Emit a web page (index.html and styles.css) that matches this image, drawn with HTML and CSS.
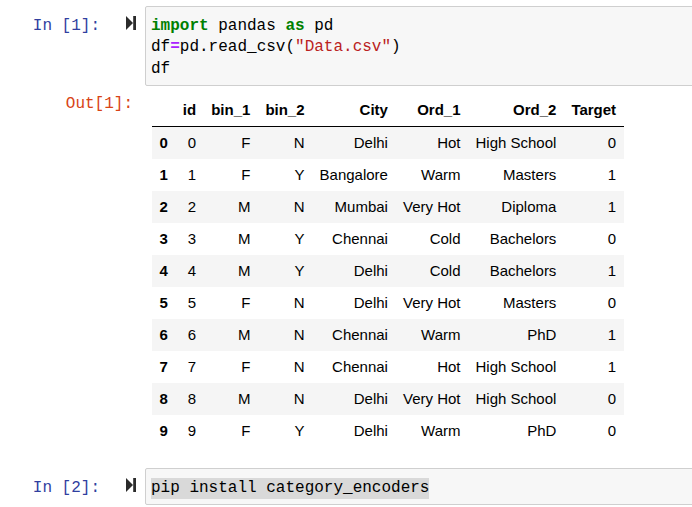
FILE: index.html
```html
<!DOCTYPE html>
<html>
<head>
<meta charset="utf-8">
<link rel="stylesheet" href="styles.css">
</head>
<body>
<div class="notebook">
  <div class="cell cell-first">
    <div class="in-row">
      <div class="prompt in-prompt">In&nbsp;[1]:</div>
      <div class="runbtn">
        <svg width="10" height="14" viewBox="0 0 10 14"><polygon points="0,0 7,7 0,14" fill="#2b2b2b"/><rect x="7.2" y="0" width="2.8" height="14" fill="#2b2b2b"/></svg>
      </div>
      <div class="input"><pre class="code"><span class="kw">import</span> pandas <span class="kw">as</span> pd
df<span class="op">=</span>pd.read_csv(<span class="str">"Data.csv"</span>)
df</pre></div>
    </div>
    <div class="out-row">
      <div class="prompt out-prompt">Out[1]:</div>
      <div class="output">
        <table class="df">
          <thead>
            <tr><th></th><th>id</th><th>bin_1</th><th>bin_2</th><th>City</th><th>Ord_1</th><th>Ord_2</th><th>Target</th></tr>
          </thead>
          <tbody>
            <tr><th>0</th><td>0</td><td>F</td><td>N</td><td>Delhi</td><td>Hot</td><td>High School</td><td>0</td></tr>
            <tr><th>1</th><td>1</td><td>F</td><td>Y</td><td>Bangalore</td><td>Warm</td><td>Masters</td><td>1</td></tr>
            <tr><th>2</th><td>2</td><td>M</td><td>N</td><td>Mumbai</td><td>Very Hot</td><td>Diploma</td><td>1</td></tr>
            <tr><th>3</th><td>3</td><td>M</td><td>Y</td><td>Chennai</td><td>Cold</td><td>Bachelors</td><td>0</td></tr>
            <tr><th>4</th><td>4</td><td>M</td><td>Y</td><td>Delhi</td><td>Cold</td><td>Bachelors</td><td>1</td></tr>
            <tr><th>5</th><td>5</td><td>F</td><td>N</td><td>Delhi</td><td>Very Hot</td><td>Masters</td><td>0</td></tr>
            <tr><th>6</th><td>6</td><td>M</td><td>N</td><td>Chennai</td><td>Warm</td><td>PhD</td><td>1</td></tr>
            <tr><th>7</th><td>7</td><td>F</td><td>N</td><td>Chennai</td><td>Hot</td><td>High School</td><td>1</td></tr>
            <tr><th>8</th><td>8</td><td>M</td><td>N</td><td>Delhi</td><td>Very Hot</td><td>High School</td><td>0</td></tr>
            <tr><th>9</th><td>9</td><td>F</td><td>Y</td><td>Delhi</td><td>Warm</td><td>PhD</td><td>0</td></tr>
          </tbody>
        </table>
      </div>
    </div>
  </div>
  <div class="cell cell-second">
    <div class="in-row">
      <div class="prompt in-prompt">In&nbsp;[2]:</div>
      <div class="runbtn">
        <svg width="10" height="14" viewBox="0 0 10 14"><polygon points="0,0 7,7 0,14" fill="#2b2b2b"/><rect x="7.2" y="0" width="2.8" height="14" fill="#2b2b2b"/></svg>
      </div>
      <div class="input"><pre class="code"><span class="sel">pip install category_encoders</span></pre></div>
    </div>
  </div>
</div>
</body>
</html>
```
FILE: styles.css
```css
html, body {
  margin: 0;
  padding: 0;
  background: #ffffff;
  overflow: hidden;
}
.notebook {
  width: 692px;
  height: 507px;
  overflow: hidden;
}
.cell-first {
  padding-top: 6px;
}
.cell-second {
  margin-top: 21px;
}
.in-row, .out-row {
  display: flex;
  align-items: flex-start;
}
.prompt {
  font-family: "Liberation Mono", "DejaVu Sans Mono", monospace;
  font-size: 16px;
  line-height: 21.25px;
  text-align: right;
  white-space: nowrap;
  flex: none;
}
.in-prompt {
  width: 100px;
  color: #303f9f;
  padding-top: 10px;
}
.out-prompt {
  width: 133px;
  color: #d84315;
  padding-top: 8px;
  margin-right: 19px;
}
.runbtn {
  width: 45px;
  flex: none;
  box-sizing: border-box;
  padding-left: 26px;
  padding-top: 10px;
  line-height: 0;
}
.input {
  flex: 1;
  margin-right: -20px;
  border: 1px solid #cfcfcf;
  border-radius: 2px;
  background: #f7f7f7;
  padding: 9px 0 5px 5px;
}
.code {
  margin: 0;
  font-family: "Liberation Mono", "DejaVu Sans Mono", monospace;
  font-size: 16px;
  line-height: 21.25px;
  color: #000;
  white-space: pre;
}
.kw {
  color: #008000;
  font-weight: bold;
}
.op {
  color: #aa22ff;
  font-weight: bold;
}
.str {
  color: #ba2121;
}
.sel {
  display: inline-block;
  background: #d9d9d9;
  height: 21.25px;
}
.output {
  padding-top: 8px;
}
.df {
  border-collapse: collapse;
  border-spacing: 0;
  font-family: "Liberation Sans", Arial, sans-serif;
  font-size: 15px;
  color: #000;
}
.df thead {
  border-bottom: 1px solid #000;
}
.df th, .df td {
  text-align: right;
  vertical-align: middle;
  padding: 7.5px;
  line-height: 17px;
  white-space: nowrap;
}
.df th {
  font-weight: bold;
}
.df tbody tr:nth-child(odd) {
  background: #f5f5f5;
}
```
